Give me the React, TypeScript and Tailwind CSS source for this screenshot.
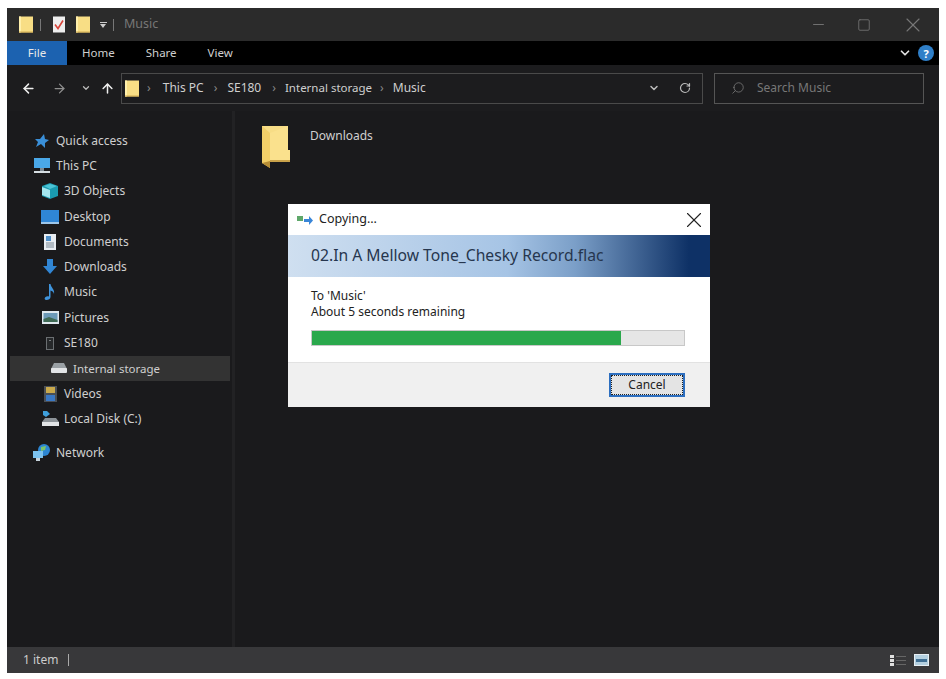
import { ArrowLeft, ArrowRight, ArrowUp, ChevronDown, RotateCw, Search, X, Minus, Square } from "lucide-react";

function Folder({ className }: { className: string }) {
  return (
    <svg viewBox="0 0 14 16" className={className}>
      <rect x="0" y="0" width="14" height="16" fill="#f8de85" />
      <path d="M0 16 L0 0 L2 0 L2 16 Z" fill="#fff0ac" />
      <path d="M0 15 H14 V16 H0 Z" fill="#d3ad4e" />
    </svg>
  );
}

function BigFolder() {
  return (
    <svg viewBox="0 0 30 44" className="h-[44px] w-[30px]">
      <path d="M1 1 H27 V24 H1 Z" fill="#f7dd86" />
      <path d="M1 1 L9 8 V43 L1 38 Z" fill="#f2cf68" />
      <path d="M9 8 L27 1 V25 L29 25 V35 H9 Z" fill="#fae18d" />
      <path d="M9 35 H29 V37 H9 Z" fill="#c9a24a" />
      <path d="M1 38 L9 43 V36 Z" fill="#b78e36" />
    </svg>
  );
}

function NavIcon({ name }: { name: string }) {
  if (name === "star")
    return (
      <svg viewBox="0 0 16 16" className="h-[16px] w-[16px]">
        <path d="M10 1 L11 6 L15 7 L11 10 L11 15 L7 11 L2 14 L4 9 L1 6 L6 6 Z" fill="#3a8fd8" />
      </svg>
    );
  if (name === "pc")
    return (
      <svg viewBox="0 0 18 16" className="h-[16px] w-[18px]">
        <rect x="1" y="0" width="16" height="10" fill="#4aa8e8" />
        <rect x="7" y="10" width="4" height="3" fill="#7d8a94" />
        <rect x="1" y="13" width="16" height="2" fill="#d5dde2" />
      </svg>
    );
  if (name === "cube")
    return (
      <svg viewBox="0 0 18 16" className="h-[16px] w-[18px]">
        <path d="M9 0 L17 3 V13 L9 16 L1 13 V3 Z" fill="#1a9bb0" />
        <path d="M1 4 L9 7 V15 L1 12 Z" fill="#a5e6ee" />
        <path d="M9 1 L16 3 L9 6 L3 3 Z" fill="#4cc4d6" />
      </svg>
    );
  if (name === "desktop")
    return (
      <svg viewBox="0 0 18 14" className="h-[14px] w-[18px]">
        <rect x="0" y="0" width="18" height="13" fill="#2f86d6" />
        <rect x="0" y="12" width="18" height="2" fill="#9cc6ea" />
      </svg>
    );
  if (name === "docs")
    return (
      <svg viewBox="0 0 12 16" className="h-[16px] w-[12px]">
        <rect x="0" y="0" width="12" height="16" fill="#e8edf2" />
        <rect x="2" y="2" width="5" height="5" fill="#4f8fc8" />
        <path d="M2 9 H10 M2 11 H10 M2 13 H10" stroke="#7b8894" strokeWidth="1" />
      </svg>
    );
  if (name === "down")
    return (
      <svg viewBox="0 0 16 16" className="h-[16px] w-[16px]">
        <path d="M5 0 H11 V7 H15 L8 15 L1 7 H5 Z" fill="#3186d4" />
      </svg>
    );
  if (name === "music")
    return (
      <svg viewBox="0 0 12 16" className="h-[16px] w-[12px]">
        <path d="M5 0 H6.5 C7 4 11 5 10 10 C9.5 7.5 8 7 6.5 6.5 V13 C6.5 15 4.5 16 2.5 16 C0.5 16 0 14 1.5 13 C2.5 12 4 12 5 12.5 Z" fill="#3f94dc" />
      </svg>
    );
  if (name === "pictures")
    return (
      <svg viewBox="0 0 17 13" className="h-[13px] w-[17px]">
        <rect x="0" y="0" width="17" height="13" fill="#dfe8ee" />
        <rect x="1.5" y="2" width="14" height="9" fill="#6c9ab8" />
        <path d="M1.5 8 L7 6 L15.5 9 V11 H1.5 Z" fill="#3f6a55" />
      </svg>
    );
  if (name === "player")
    return (
      <svg viewBox="0 0 8 13" className="h-[13px] w-[8px]">
        <rect x="0" y="0" width="8" height="13" fill="#6b6f72" />
        <rect x="1" y="1" width="6" height="11" fill="#26282a" />
        <rect x="3.5" y="3" width="1" height="1" fill="#cfd4d8" />
      </svg>
    );
  if (name === "drive")
    return (
      <svg viewBox="0 0 16 10" className="h-[10px] w-[16px]">
        <path d="M3 0 H13 L16 6 H0 Z" fill="#9aa0a4" />
        <rect x="0" y="5" width="16" height="5" rx="1" fill="#e2e4e6" />
      </svg>
    );
  if (name === "videos")
    return (
      <svg viewBox="0 0 13 16" className="h-[16px] w-[13px]">
        <rect x="0" y="0" width="13" height="16" fill="#4a4f55" />
        <rect x="2" y="1" width="9" height="6" fill="#c9a94c" />
        <rect x="2" y="9" width="9" height="6" fill="#3a78c4" />
      </svg>
    );
  if (name === "disk")
    return (
      <svg viewBox="0 0 17 15" className="h-[15px] w-[17px]">
        <path d="M1 0 H5 L8 3 L4 6 L1 4 Z" fill="#3fa0dc" />
        <path d="M3 7 H14 L17 11 H0 Z" fill="#8d9398" />
        <rect x="0" y="11" width="17" height="4" fill="#e2e4e6" />
      </svg>
    );
  return (
    <svg viewBox="0 0 18 18" className="h-[18px] w-[18px]">
      <circle cx="11" cy="6" r="6" fill="#2c86d2" />
      <path d="M8 3 L13 2 L12 6 L8 7 Z" fill="#7cc46a" />
      <rect x="0" y="7" width="10" height="7" fill="#7cc2ee" />
      <rect x="3" y="14" width="4" height="3" fill="#c5d2da" />
    </svg>
  );
}

const navItems = [
  { label: "Quick access", icon: "star", box: "pl-[23px]", text: "" },
  { label: "This PC", icon: "pc", box: "pl-[23px]", text: "" },
  { label: "3D Objects", icon: "cube", box: "pl-[31px]", text: "" },
  { label: "Desktop", icon: "desktop", box: "pl-[31px]", text: "" },
  { label: "Documents", icon: "docs", box: "pl-[31px]", text: "" },
  { label: "Downloads", icon: "down", box: "pl-[31px]", text: "" },
  { label: "Music", icon: "music", box: "pl-[31px]", text: "" },
  { label: "Pictures", icon: "pictures", box: "pl-[31px]", text: "" },
  { label: "SE180", icon: "player", box: "pl-[31px]", text: "" },
  { label: "Internal storage", icon: "drive", box: "pl-[40px] bg-[#333333]", text: "text-[11.5px]" },
  { label: "Videos", icon: "videos", box: "pl-[31px]", text: "" },
  { label: "Local Disk (C:)", icon: "disk", box: "pl-[31px] mb-[8.5px]", text: "" },
  { label: "Network", icon: "network", box: "pl-[23px]", text: "" },
];

export default function App() {
  return (
    <div className="h-[679px] w-[946px] bg-white pl-[7px] pt-[8px] font-['Noto_Sans',sans-serif]">
      <div className="relative flex h-[665px] w-[932px] flex-col bg-[#1a1a1c] text-[12px] text-[#cfcfcf]">
        {/* title bar */}
        <div className="flex h-[33px] shrink-0 items-center bg-[#2b2b2b] pl-[12px]">
          <Folder className="h-[17px] w-[14px]" />
          <div className="ml-[7px] h-[12px] w-[1px] bg-[#777777]" />
          <svg viewBox="0 0 12 16" className="ml-[12px] h-[17px] w-[12px]">
            <rect width="12" height="16" fill="#eeeeee" />
            <path d="M2 8 L5 12 L10 4" stroke="#d8443a" strokeWidth="1.6" fill="none" />
          </svg>
          <Folder className="ml-[11px] h-[17px] w-[14px]" />
          <div className="ml-[9px] flex w-[8px] flex-col items-center">
            <div className="mb-[1px] h-[1px] w-[7px] bg-[#cccccc]" />
            <div className="h-0 w-0 border-x-[3.5px] border-t-[4px] border-x-transparent border-t-[#cccccc]" />
          </div>
          <div className="ml-[6px] h-[12px] w-[1px] bg-[#777777]" />
          <span className="ml-[10px] text-[12.5px] text-[#777777]">Music</span>
          <div className="ml-auto flex items-center pr-[14px] text-[#777777]">
            <Minus size={17} strokeWidth={1.3} />
            <Square size={14} strokeWidth={1.4} className="ml-[30px]" />
            <X size={24} strokeWidth={1.1} className="ml-[30px]" />
          </div>
        </div>
        {/* ribbon tabs */}
        <div className="flex h-[24px] shrink-0 items-center bg-black text-[11.5px]">
          <div className="flex h-full w-[60px] items-center justify-center bg-[#1c62b0] text-[#e8e8e8]">File</div>
          <span className="ml-[15px]">Home</span>
          <span className="ml-[31px]">Share</span>
          <span className="ml-[31px]">View</span>
          <div className="ml-auto flex items-center pr-[5px]">
            <ChevronDown size={14} strokeWidth={3} className="text-[#e0e0e0]" />
            <div className="ml-[6px] flex h-[16px] w-[16px] items-center justify-center rounded-full bg-[#2f7fc8] text-[11px] font-bold leading-none text-white">?</div>
          </div>
        </div>
        {/* address row */}
        <div className="flex h-[46px] shrink-0 items-center bg-[#1c1c1e] pl-[14px]">
          <ArrowLeft size={15} strokeWidth={2.4} className="text-[#eeeeee]" />
          <ArrowRight size={15} strokeWidth={2} className="ml-[16px] text-[#8f8f8f]" />
          <ChevronDown size={10} strokeWidth={3} className="ml-[14px] text-[#bbbbbb]" />
          <ArrowUp size={15} strokeWidth={2.4} className="ml-[9px] text-[#eeeeee]" />
          <div className="ml-[6px] flex h-[31px] w-[582px] items-center border border-[#4a4a4a] pl-[3px]">
            <Folder className="h-[17px] w-[14px]" />
            <span className="ml-[8px] text-[#888888]">›</span>
            <span className="ml-[12px]">This PC</span>
            <span className="ml-[10px] text-[#888888]">›</span>
            <span className="ml-[10px]">SE180</span>
            <span className="ml-[11px] text-[#888888]">›</span>
            <span className="ml-[9px] text-[11.5px]">Internal storage</span>
            <span className="ml-[8px] text-[#888888]">›</span>
            <span className="ml-[9px]">Music</span>
            <div className="ml-auto flex items-center pr-[11px] text-[#bbbbbb]">
              <ChevronDown size={12} strokeWidth={3} />
              <RotateCw size={12} strokeWidth={2.4} className="ml-[19px]" />
            </div>
          </div>
          <div className="ml-[11px] flex h-[31px] w-[210px] items-center border border-[#555555] pl-[16px] text-[#777777]">
            <Search size={14} strokeWidth={1.4} className="-scale-x-100" />
            <span className="ml-[12px]">Search Music</span>
          </div>
        </div>
        {/* body */}
        <div className="flex min-h-0 flex-1">
          <div className="w-[225px] shrink-0 pl-[3px] pr-[2px] pt-[17px]">
            {navItems.map((item) => (
              <div key={item.label} className={`flex h-[25.3px] items-center ${item.box}`}>
                <div className="flex w-[18px] shrink-0 items-center justify-center">
                  <NavIcon name={item.icon} />
                </div>
                <span className={`ml-[5px] ${item.text}`}>{item.label}</span>
              </div>
            ))}
          </div>
          <div className="w-[3px] shrink-0 bg-[#222224]" />
          <div className="flex-1 pl-[26px] pt-[14px]">
            <div className="flex items-start">
              <BigFolder />
              <span className="ml-[19px] mt-[1.5px]">Downloads</span>
            </div>
          </div>
        </div>
        {/* status bar */}
        <div className="flex h-[26px] shrink-0 items-center bg-[#38383a] pl-[16px] text-[#cccccc]">
          <span>1 item</span>
          <div className="ml-[10px] h-[12px] w-[1px] bg-[#aaaaaa]" />
          <div className="ml-auto flex items-center pr-[10px]">
            <div className="flex flex-col gap-[1px]">
              <div className="flex items-center gap-[2px]"><div className="h-[3px] w-[4px] bg-[#e0e0e0]" /><div className="h-[1px] w-[10px] bg-[#666666]" /></div>
              <div className="flex items-center gap-[2px]"><div className="h-[3px] w-[4px] bg-[#e0e0e0]" /><div className="h-[1px] w-[10px] bg-[#666666]" /></div>
              <div className="flex items-center gap-[2px]"><div className="h-[3px] w-[4px] bg-[#e0e0e0]" /><div className="h-[1px] w-[10px] bg-[#666666]" /></div>
            </div>
            <div className="ml-[8px] flex h-[12px] w-[15px] flex-col justify-center border border-[#e6eef3] bg-[#b4d0e0]">
              <div className="mx-[1px] h-[3px] bg-[#3f6f94]" />
            </div>
          </div>
        </div>
        {/* copy dialog */}
        <div className="absolute left-[281px] top-[196px] flex h-[203px] w-[421.5px] flex-col bg-white text-[#222222]">
          <div className="flex h-[31px] shrink-0 items-center pl-[9px] pr-[2.5px] text-[12.5px]">
            <svg viewBox="0 0 16 10" className="h-[10px] w-[16px]">
              <rect x="0" y="1" width="6" height="5" fill="#5fa86a" />
              <path d="M7 4 H12 V1 L16 5.5 L12 10 V7 H7 Z" fill="#3a86d8" />
            </svg>
            <span className="ml-[6px]">Copying...</span>
            <X size={26} strokeWidth={1} className="ml-auto text-[#222222]" />
          </div>
          <div className="flex h-[42px] shrink-0 items-center bg-[linear-gradient(90deg,#cfdff0_0%,#a6c4e5_52%,#7b9fc8_68%,#0e3166_95%)] pl-[23px] text-[15.7px] text-[#26364e]">
            02.In A Mellow Tone_Chesky Record.flac
          </div>
          <div className="flex-1 pl-[23px] pr-[24.5px] pt-[11px] text-[12px] leading-[16px]">
            <div>To 'Music'</div>
            <div>About 5 seconds remaining</div>
            <div className="mt-[10px] h-[16px] w-full border border-[#c8c8c8] bg-[#e6e6e6]">
              <div className="h-full w-[83%] bg-[#2aa84c]" />
            </div>
          </div>
          <div className="flex h-[45px] shrink-0 items-center justify-end border-t border-[#e2e2e2] bg-[#f0f0f0] pr-[24.5px]">
            <div className="flex h-[24px] w-[76px] items-center justify-center border-2 border-[#2d6fc0] bg-[#e4e4e4] text-[12px] outline-1 -outline-offset-3 outline-dotted outline-[#222222]">
              Cancel
            </div>
          </div>
        </div>
      </div>
    </div>
  );
}
